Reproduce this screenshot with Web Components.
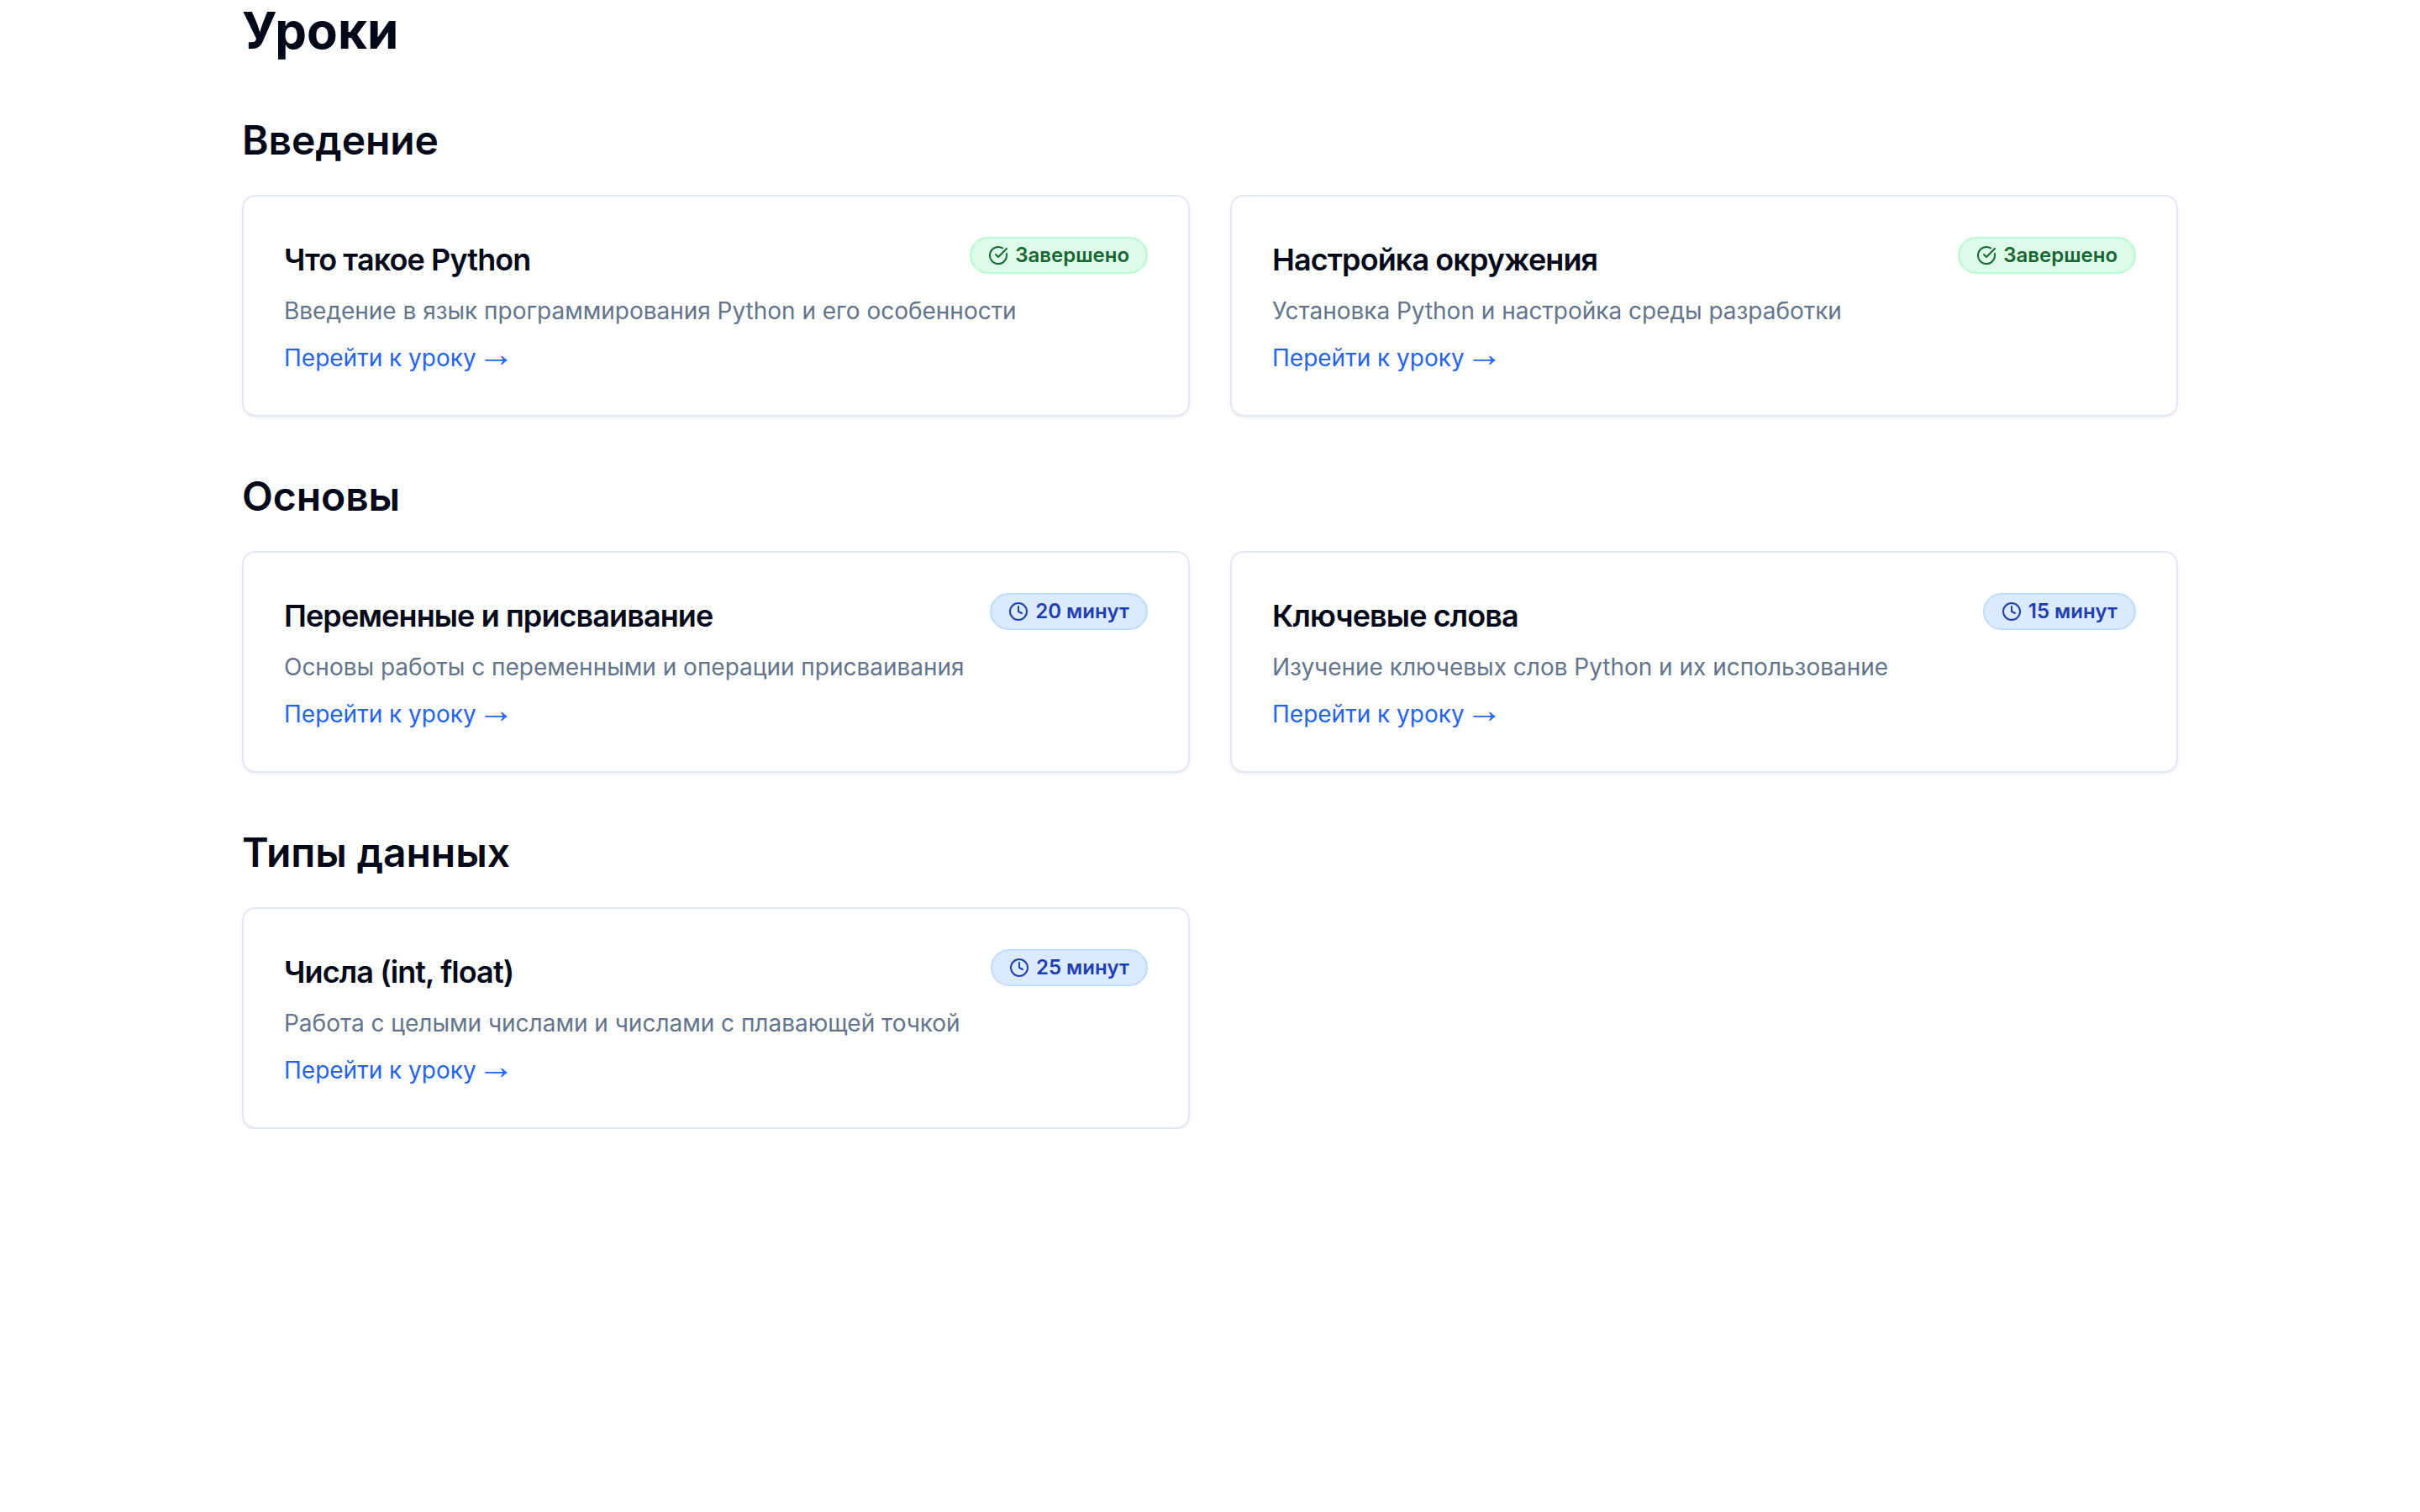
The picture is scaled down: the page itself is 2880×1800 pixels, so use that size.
<!DOCTYPE html>
<html lang="ru">
<head>
<meta charset="utf-8">
<title>Уроки</title>
<style>
    body {
        margin: 0;
        background: white;
        color: #020817;
        font-family: Inter, "Liberation Sans", sans-serif;
    }
</style>
</head>
<body>
<lesson-page heading="Уроки">
    <lesson-section heading="Введение">
        <lesson-card heading="Что такое Python">
            <lesson-badge slot="badge" kind="done">Завершено</lesson-badge>
            Введение в язык программирования Python и его особенности
        </lesson-card>
        <lesson-card heading="Настройка окружения">
            <lesson-badge slot="badge" kind="done">Завершено</lesson-badge>
            Установка Python и настройка среды разработки
        </lesson-card>
    </lesson-section>
    <lesson-section heading="Основы">
        <lesson-card heading="Переменные и присваивание">
            <lesson-badge slot="badge" kind="time">20 минут</lesson-badge>
            Основы работы с переменными и операции присваивания
        </lesson-card>
        <lesson-card heading="Ключевые слова">
            <lesson-badge slot="badge" kind="time">15 минут</lesson-badge>
            Изучение ключевых слов Python и их использование
        </lesson-card>
    </lesson-section>
    <lesson-section heading="Типы данных">
        <lesson-card heading="Числа (int, float)">
            <lesson-badge slot="badge" kind="time">25 минут</lesson-badge>
            Работа с целыми числами и числами с плавающей точкой
        </lesson-card>
    </lesson-section>
</lesson-page>

<script>
class LessonPage extends HTMLElement {
    constructor() {
        super()
        this.attachShadow({ mode: 'open'})

        const template = document.createElement('template')
        template.innerHTML = `
            <style>
            :host {
                display: flex;
                flex-direction: column;
                gap: 64px;
                width: 2304px;
                margin: 0 auto;
            }
            h1 {
                margin: 0;
                font-size: 60px;
                line-height: 72px;
                font-weight: 700;
            }
            </style>
            <h1 id="heading"></h1>
            <slot></slot>
        `
        this.shadowRoot.appendChild(template.content.cloneNode(true))
        this.shadowRoot.getElementById("heading").textContent = this.getAttribute("heading")
    }
}

class LessonSection extends HTMLElement {
    constructor() {
        super()
        this.attachShadow({ mode: 'open'})

        const template = document.createElement('template')
        template.innerHTML = `
            <style>
            :host {
                display: block;
            }
            h2 {
                margin: 0 0 34px;
                font-size: 48px;
                line-height: 62px;
                font-weight: 600;
                letter-spacing: -0.08px;
            }
            .cards {
                display: grid;
                grid-template-columns: 1fr 1fr;
                gap: 48px;
            }
            </style>
            <h2 id="heading"></h2>
            <div class="cards"><slot></slot></div>
        `
        this.shadowRoot.appendChild(template.content.cloneNode(true))
        this.shadowRoot.getElementById("heading").textContent = this.getAttribute("heading")
    }
}

class LessonCard extends HTMLElement {
    constructor() {
        super()
        this.attachShadow({ mode: 'open'})

        const template = document.createElement('template')
        template.innerHTML = `
            <style>
            :host {
                display: block;
                box-sizing: border-box;
                padding: 48px;
                border: 2px solid #e2e8f0;
                border-radius: 16px;
                background: white;
                box-shadow: 0 2px 4px rgba(0, 0, 0, 0.05);
            }
            .header {
                display: flex;
                justify-content: space-between;
                align-items: flex-start;
                margin-bottom: 14px;
            }
            h3 {
                margin: 0;
                font-size: 36px;
                line-height: 54px;
                font-weight: 600;
                letter-spacing: -0.025em;
            }
            p {
                margin: 0 0 16px;
                font-size: 28px;
                line-height: 40px;
                letter-spacing: -0.02px;
                color: #64748b;
            }
            a {
                display: flex;
                align-items: baseline;
                gap: 1.5px;
                font-size: 28px;
                line-height: 40px;
                color: #2563eb;
                text-decoration: none;
            }
            /* long thin arrow with a small head */
            .arrow {
                font-family: "Liberation Sans", sans-serif;
                font-size: 44px;
                line-height: 0;
            }
            </style>
            <div class="header">
                <h3 id="heading"></h3>
                <slot name="badge"></slot>
            </div>
            <p><slot></slot></p>
            <a href="#"><span>Перейти к уроку</span> <span class="arrow">→</span></a>
        `
        this.shadowRoot.appendChild(template.content.cloneNode(true))
        this.shadowRoot.getElementById("heading").textContent = this.getAttribute("heading")
    }
}

const icons = {
    done: `<path d="M21.801 10A10 10 0 1 1 17 3.335"/><path d="m9 11 3 3L22 4"/>`,
    time: `<circle cx="12" cy="12" r="10"/><path d="M12 6v6l4 2"/>`
}

class LessonBadge extends HTMLElement {
    constructor() {
        super()
        this.attachShadow({ mode: 'open'})

        const template = document.createElement('template')
        template.innerHTML = `
            <style>
            :host {
                display: inline-flex;
                align-items: center;
                gap: 8px;
                padding: 4px 20px;
                border: 2px solid #bfdbfe;
                border-radius: 9999px;
                background: #dbeafe;
                color: #1e40af;
                font-size: 24px;
                line-height: 32px;
                font-weight: 600;
                white-space: nowrap;
            }
            :host([kind="done"]) {
                border-color: #bbf7d0;
                background: #dcfce7;
                color: #166534;
            }
            svg {
                width: 24px;
                height: 24px;
                fill: none;
                stroke: currentColor;
                stroke-width: 2;
                stroke-linecap: round;
                stroke-linejoin: round;
            }
            </style>
            <svg viewBox="0 0 24 24">${icons[this.getAttribute("kind")]}</svg>
            <span><slot></slot></span>
        `
        this.shadowRoot.appendChild(template.content.cloneNode(true))
    }
}

customElements.define('lesson-page', LessonPage)
customElements.define('lesson-section', LessonSection)
customElements.define('lesson-card', LessonCard)
customElements.define('lesson-badge', LessonBadge)
</script>
</body>
</html>
